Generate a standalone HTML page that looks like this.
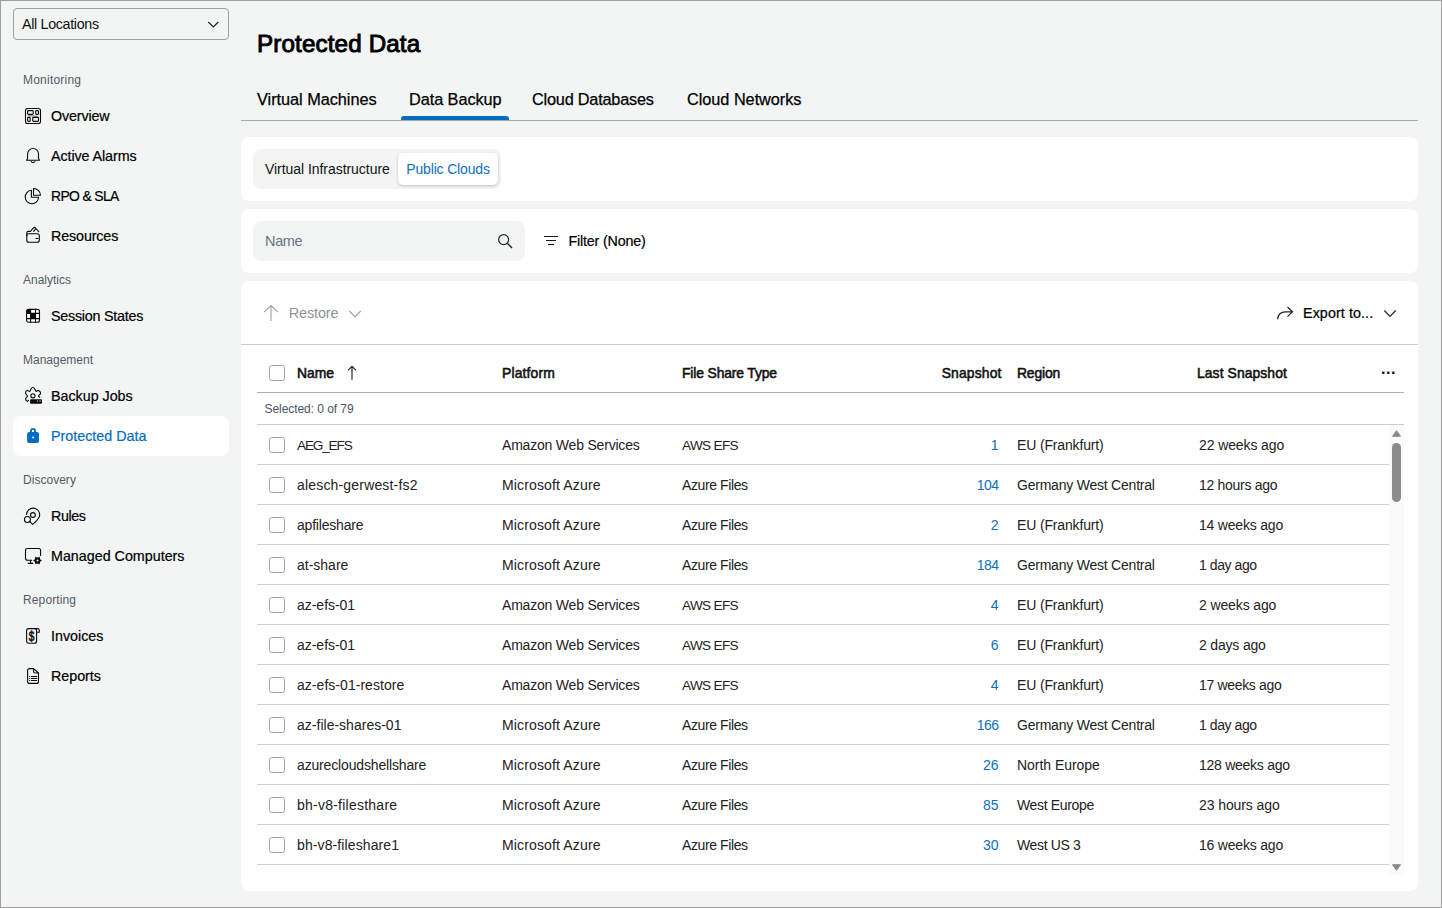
<!DOCTYPE html>
<html lang="en">
<head>
<meta charset="utf-8">
<title>Protected Data</title>
<style>
*{box-sizing:border-box;margin:0;padding:0}
html,body{width:1442px;height:908px;overflow:hidden}
body{background:#f3f5f5;font-family:"Liberation Sans",sans-serif;color:#111;position:relative;font-size:14px}
.frame{position:absolute;left:0;top:0;width:1442px;height:908px;border:1px solid #a0a0a0;pointer-events:none;z-index:10}
.abs{position:absolute;white-space:nowrap}
/* sidebar */
.loc{left:13px;top:8px;width:216px;height:32px;border:1px solid #9b9fa3;border-radius:4px}
.loc span{position:absolute;left:8px;top:0;line-height:31px;font-size:14.3px}
.sec{left:23px;font-size:12px;color:#545a66;line-height:16px}
.nav{left:13px;width:216px;height:40px;border-radius:8px}
.nav .t{position:absolute;left:38px;top:0;line-height:40px;font-size:14.3px;color:#000;-webkit-text-stroke:0.2px #000}
.nav svg{position:absolute;left:12px;top:12px;width:16px;height:16px}
.nav.sel{background:#fff}
.nav.sel .t{color:#046cbe;-webkit-text-stroke:0.2px #046cbe}
/* main */
h1{left:257px;top:28.5px;font-size:24.2px;line-height:30px;font-weight:400;color:#000;-webkit-text-stroke:0.95px #000}
.tab{top:88px;font-size:16.3px;line-height:22px;color:#000;-webkit-text-stroke:0.25px #000}
.tabline{left:241px;top:120px;width:1177px;height:1px;background:#a8acae}
.tabsel{left:401px;top:116px;width:108px;height:4px;background:#006dbe;border-radius:3px 3px 0 0}
.panel{left:241px;width:1177px;background:#fff;border-radius:8px}
.seg{left:253px;top:149px;width:248px;height:40px;border-radius:8px;background:#f3f5f5}
.seg .a{position:absolute;left:12px;top:0;line-height:40px;font-size:14px;color:#111}
.seg .b{position:absolute;left:145px;top:4px;width:100px;height:32px;border-radius:5px;background:#fff;box-shadow:0 1px 3px rgba(0,0,0,.22);text-align:center;line-height:32px;font-size:14px;color:#0c70c0}
.search{left:253px;top:221px;width:272px;height:40px;border-radius:8px;background:#f3f5f5}
.search .ph{position:absolute;left:12px;top:0;line-height:40px;font-size:14.5px;color:#6c737c}
.filter{left:568.5px;top:221px;line-height:40px;font-size:14.3px;color:#000;-webkit-text-stroke:0.2px #000}
.restore{left:288.8px;top:293px;line-height:40px;font-size:14.5px;color:#8d949b}
.export{left:1303px;top:293px;line-height:40px;font-size:14.3px;color:#000;-webkit-text-stroke:0.2px #000}
.hline{left:241px;top:344px;width:1177px;height:1px;background:#c9cfd1}
.th{top:353px;line-height:41px;font-size:13.9px;font-weight:400;color:#111;-webkit-text-stroke:0.55px #111}
.dots{left:1381px;top:349px;line-height:40px;font-size:16px;font-weight:700;letter-spacing:0.5px;color:#111}
.thline{left:257px;top:392px;width:1147px;height:1px;background:#a9b0b3}
.selrow{left:264.5px;top:393px;line-height:33px;font-size:12px;color:#4d5562}
.selline{left:257px;top:424px;width:1147px;height:1px;background:#c9cfd1}
.cb{position:absolute;left:12px;top:12px;width:16px;height:16px;border:1px solid #9da3a8;border-radius:2.5px;background:#fff}
.row{left:257px;width:1132px;height:40px;border-bottom:1px solid #ccd3d5;color:#222;font-size:14px;line-height:41px}
.row .c{position:absolute;top:0;white-space:nowrap}
.c1{left:40px}.c2{left:245px}.c3{left:425px}.c4{right:390.5px;color:#0c70c0}.c5{left:760px}.c6{left:942px}
.sbtrack{left:1389px;top:425px;width:15px;height:450px;background:#fafafa}
.sbthumb{left:1392px;top:443px;width:9px;height:59px;border-radius:5px;background:#8b8b8b}
</style>
</head>
<body>
<div class="frame"></div>
<!-- sidebar -->
<div class="abs loc"><span style="letter-spacing:-0.333px">All Locations</span>
<svg style="position:absolute;left:193px;top:10px" width="13" height="11" viewBox="0 0 13 11"><path d="M1.3 3 L6.3 8 L11.3 3" fill="none" stroke="#222" stroke-width="1.2"/></svg>
</div>
<div class="abs sec" style="top:72px;letter-spacing:0.222px">Monitoring</div>
<div class="abs nav" style="top:96px"><svg viewBox="0 0 16 16" overflow="visible"><rect x="0.5" y="0.5" width="15" height="15" rx="2" fill="none" stroke="#0a0a0a" stroke-width="1.1" stroke-linecap="round" stroke-linejoin="round"/><path d="M3.2 7.6 L12.8 8.3" stroke="#8a8a8a" stroke-width="1.3" fill="none"/><rect x="2.6" y="2.6" width="5.6" height="3.8" rx="0.8" fill="none" stroke="#0a0a0a" stroke-width="1.1" stroke-linecap="round" stroke-linejoin="round"/><rect x="10.7" y="2.6" width="2.8" height="3.8" rx="0.8" fill="none" stroke="#0a0a0a" stroke-width="1.1" stroke-linecap="round" stroke-linejoin="round"/><rect x="2.6" y="9.35" width="2.6" height="4" rx="0.8" fill="none" stroke="#0a0a0a" stroke-width="1.1" stroke-linecap="round" stroke-linejoin="round"/><rect x="7.7" y="9.35" width="5.8" height="4" rx="0.8" fill="none" stroke="#0a0a0a" stroke-width="1.1" stroke-linecap="round" stroke-linejoin="round"/></svg><span class="t" style="letter-spacing:-0.143px">Overview</span></div>
<div class="abs nav" style="top:136px"><svg viewBox="0 0 16 16" overflow="visible"><path d="M2.6 10.5 V6 A5.45 5.45 0 0 1 13.5 6 V10.5 L14.5 12.2 H1.6 Z" fill="none" stroke="#0a0a0a" stroke-width="1.1" stroke-linecap="round" stroke-linejoin="round"/><path d="M6 13 A2.1 2.1 0 0 0 10.1 13" fill="none" stroke="#0a0a0a" stroke-width="1.1" stroke-linecap="round" stroke-linejoin="round"/></svg><span class="t" style="letter-spacing:-0.083px">Active Alarms</span></div>
<div class="abs nav" style="top:176px"><svg viewBox="0 0 16 16" overflow="visible"><path d="M6.4 2.3 V9.3 H13.6 A6.7 6.7 0 1 1 6.4 2.3 Z" fill="none" stroke="#0a0a0a" stroke-width="1.1" stroke-linecap="round" stroke-linejoin="round"/><path d="M8.5 0.5 V7.3 H15.5 A7 7 0 0 0 8.5 0.5 Z" fill="none" stroke="#0a0a0a" stroke-width="1.1" stroke-linecap="round" stroke-linejoin="round"/></svg><span class="t" style="font-size:13.9px;letter-spacing:-0.625px">RPO &amp; SLA</span></div>
<div class="abs nav" style="top:216px"><svg viewBox="0 0 16 16" overflow="visible"><rect x="1.8" y="5.7" width="12.5" height="8.6" rx="2" fill="none" stroke="#0a0a0a" stroke-width="1.1" stroke-linecap="round" stroke-linejoin="round"/><path d="M1.8 7.5 V5 Q1.8 3.4 3.4 3.4 H5.4 L8.7 -0.3 Q9.3 -0.9 10 -0.3 L13.8 3.6 M8.6 3.4 L10.6 0.9 M11 10.5 H13" fill="none" stroke="#0a0a0a" stroke-width="1.1" stroke-linecap="round" stroke-linejoin="round"/></svg><span class="t" style="letter-spacing:-0.125px">Resources</span></div>
<div class="abs sec" style="top:272px">Analytics</div>
<div class="abs nav" style="top:296px"><svg viewBox="0 0 16 16" overflow="visible"><rect x="1.6" y="1.4" width="12.9" height="12.9" rx="2" fill="#fff" stroke="#0a0a0a" stroke-width="1.1"/><path d="M5.6 1.4 V14.3 M10.5 1.4 V14.3 M1.6 5.4 H14.5 M1.6 10.6 H14.5" fill="none" stroke="#0a0a0a" stroke-width="1.1" stroke-linecap="round" stroke-linejoin="round"/><path d="M1.6 3.4 Q1.6 1.4 3.6 1.4 H5.6 V5.4 H1.6 Z M5.6 5.4 H10.5 V10.6 H5.6 Z" fill="#0a0a0a"/></svg><span class="t" style="letter-spacing:-0.231px">Session States</span></div>
<div class="abs sec" style="top:352px">Management</div>
<div class="abs nav" style="top:376px"><svg viewBox="0 0 16 16" overflow="visible"><path d="M3.4 12.3 C3.22 12.47 2.78 13.55 2.3 13.3 C1.82 13.05 0.48 11.65 0.5 10.8 C0.52 9.95 2.40 9.13 2.4 8.2 C2.40 7.27 0.55 6.17 0.5 5.2 C0.45 4.23 1.42 2.70 2.1 2.4 C2.78 2.10 3.90 3.72 4.6 3.4 C5.30 3.08 5.75 1.20 6.3 0.5 C6.85 -0.20 7.37 -0.80 7.9 -0.8 C8.43 -0.80 8.95 -0.20 9.5 0.5 C10.05 1.20 10.53 3.08 11.2 3.4 C11.87 3.72 12.77 2.10 13.5 2.4 C14.23 2.70 15.60 4.27 15.6 5.2 C15.60 6.13 13.63 7.32 13.5 8.0 C13.37 8.68 14.58 9.08 14.8 9.3" fill="none" stroke="#0a0a0a" stroke-width="1.1" stroke-linecap="round" stroke-linejoin="round"/><circle cx="7.9" cy="7.8" r="2.1" fill="none" stroke="#0a0a0a" stroke-width="1.1" stroke-linecap="round" stroke-linejoin="round"/><rect x="5.1" y="11.2" width="11.9" height="4.6" rx="0.8" fill="#0a0a0a"/><rect x="12" y="12.3" width="1" height="1.5" fill="#aaa"/><rect x="14.3" y="12.3" width="1.5" height="1.5" fill="#888"/></svg><span class="t" style="letter-spacing:-0.020px">Backup Jobs</span></div>
<div class="abs nav sel" style="top:416px"><svg viewBox="0 0 16 16" overflow="visible"><rect x="2.1" y="4.1" width="11.9" height="10.9" rx="2" fill="#086dc0"/><path d="M6 4.5 V2.9 A2 2 0 0 1 10 2.9 V4.5" fill="none" stroke="#086dc0" stroke-width="1.9"/><rect x="7" y="8.7" width="2.2" height="1.5" fill="#fff"/></svg><span class="t">Protected Data</span></div>
<div class="abs sec" style="top:472px;letter-spacing:0.025px">Discovery</div>
<div class="abs nav" style="top:496px"><svg viewBox="0 0 16 16" overflow="visible"><path d="M1.5 6.4 A6.6 6.6 0 0 1 14.7 7 C14.7 10.5 11 13.5 7.6 16.4 L4.6 13.4" fill="none" stroke="#0a0a0a" stroke-width="1.1" stroke-linecap="round" stroke-linejoin="round"/><circle cx="7.9" cy="7" r="2.4" fill="none" stroke="#0a0a0a" stroke-width="1.1" stroke-linecap="round" stroke-linejoin="round"/><circle cx="2.45" cy="11.5" r="3" fill="none" stroke="#0a0a0a" stroke-width="1.1" stroke-linecap="round" stroke-linejoin="round"/></svg><span class="t" style="letter-spacing:-0.400px">Rules</span></div>
<div class="abs nav" style="top:536px"><svg viewBox="0 0 16 16" overflow="visible"><path d="M15.6 7.5 V2.5 Q15.6 0.5 13.6 0.5 H2.5 Q0.5 0.5 0.5 2.5 V10.3 Q0.5 12.3 2.5 12.3 H6.7 M5.6 12.3 V15.4 M3.2 15.4 H7.8" fill="none" stroke="#0a0a0a" stroke-width="1.1" stroke-linecap="round" stroke-linejoin="round"/><polygon points="17.00,12.50 14.75,13.80 14.75,16.40 12.50,15.10 10.25,16.40 10.25,13.80 8.00,12.50 10.25,11.20 10.25,8.60 12.50,9.90 14.75,8.60 14.75,11.20" fill="#0a0a0a"/><circle cx="12.5" cy="12.5" r="2.9" fill="#0a0a0a"/><circle cx="12.5" cy="12.5" r="0.95" fill="#fff"/></svg><span class="t">Managed Computers</span></div>
<div class="abs sec" style="top:592px;letter-spacing:0.125px">Reporting</div>
<div class="abs nav" style="top:616px"><svg viewBox="0 0 16 16" overflow="visible"><rect x="1.6" y="0.6" width="10" height="14.7" rx="2" fill="none" stroke="#0a0a0a" stroke-width="1.1" stroke-linecap="round" stroke-linejoin="round"/><path d="M10 0.6 H12.5 Q14.3 0.6 14.3 2.4 V4.2 H11.6" fill="none" stroke="#0a0a0a" stroke-width="1.1" stroke-linecap="round" stroke-linejoin="round"/><text transform="translate(6.5,12.9) scale(0.72,1)" font-family="Liberation Sans, sans-serif" font-size="14" text-anchor="middle" fill="#0a0a0a" stroke="#0a0a0a" stroke-width="0.55" text-rendering="geometricPrecision">$</text></svg><span class="t">Invoices</span></div>
<div class="abs nav" style="top:656px"><svg viewBox="0 0 16 16" overflow="visible"><path d="M4.6 0.6 H8.6 L13.5 5 V13.4 Q13.5 15.4 11.5 15.4 H4.6 Q2.6 15.4 2.6 13.4 V2.6 Q2.6 0.6 4.6 0.6 M8.6 0.6 V3.5 Q8.6 5 10.1 5 H13.5 M6.3 8.45 H11.8 M6.3 10.45 H11.8 M6.3 12.5 H11.8 M4.4 8.45 h0.01 M4.4 10.45 h0.01 M4.4 12.5 h0.01" fill="none" stroke="#0a0a0a" stroke-width="1.1" stroke-linecap="round" stroke-linejoin="round"/></svg><span class="t" style="letter-spacing:-0.033px">Reports</span></div>

<!-- main -->
<h1 class="abs" style="letter-spacing:0.138px">Protected Data</h1>
<div class="abs tab" style="left:257px;letter-spacing:-0.027px">Virtual Machines</div>
<div class="abs tab" style="left:409px;letter-spacing:-0.060px">Data Backup</div>
<div class="abs tab" style="left:532px;letter-spacing:-0.214px">Cloud Databases</div>
<div class="abs tab" style="left:687px;letter-spacing:-0.031px">Cloud Networks</div>
<div class="abs tabline"></div>
<div class="abs tabsel"></div>
<div class="abs panel" style="top:137px;height:64px"></div>
<div class="abs panel" style="top:209px;height:64px"></div>
<div class="abs panel" style="top:281px;height:610px"></div>
<div class="abs seg"><span class="a" style="letter-spacing:-0.048px">Virtual Infrastructure</span><span class="b"><span style="letter-spacing:-0.167px">Public Clouds</span></span></div>
<div class="abs search"><span class="ph" style="letter-spacing:-0.333px">Name</span>
<svg style="position:absolute;left:244px;top:12px" width="16" height="16" viewBox="0 0 16 16"><circle cx="6.6" cy="6.6" r="5" fill="none" stroke="#222" stroke-width="1.2"/><path d="M10.2 10.2 L15 15" stroke="#222" stroke-width="1.4" fill="none"/></svg>
</div>
<svg class="abs" style="left:543px;top:234px" width="16" height="14" viewBox="0 0 16 14"><path d="M1 2.5 H15 M3 6.5 H13 M5 10.5 H11" stroke="#1a1a1a" stroke-width="1" fill="none"/></svg>
<div class="abs filter" style="letter-spacing:-0.183px">Filter (None)</div>
<svg class="abs" style="left:263px;top:304px" width="16" height="18" viewBox="0 0 16 18"><path d="M8 17 V2 M1.2 8.2 L8 1.5 L14.8 8.2" stroke="#9ba1a7" stroke-width="1.1" fill="none"/></svg>
<div class="abs restore" style="letter-spacing:-0.167px">Restore</div>
<svg class="abs" style="left:348px;top:308.7px" width="14" height="10" viewBox="0 0 14 10"><path d="M1.3 2 L7 8 L12.7 2" stroke="#9ba1a7" stroke-width="1.1" fill="none"/></svg>
<svg class="abs" style="left:1276px;top:305px" width="18" height="16" viewBox="0 0 18 16"><path d="M1.6 14.2 C2 9.6 4.8 6.8 9.5 6.8 H16 M11.5 2 L16.5 6.8 L11.5 11.6" stroke="#222" stroke-width="1.2" fill="none"/></svg>
<div class="abs export" style="letter-spacing:0.091px">Export to...</div>
<svg class="abs" style="left:1383px;top:308px" width="14" height="10" viewBox="0 0 14 10"><path d="M1.3 2.5 L7 8.5 L12.7 2.5" stroke="#222" stroke-width="1.2" fill="none"/></svg>
<div class="abs hline"></div>
<i class="cb abs" style="left:269px;top:365px"></i>
<div class="abs th" style="left:297px">Name</div>
<div class="abs th" style="left:502px;letter-spacing:0.143px">Platform</div>
<div class="abs th" style="left:682px;letter-spacing:-0.143px">File Share Type</div>
<div class="abs th" style="right:440.5px;letter-spacing:0.143px">Snapshot</div>
<div class="abs th" style="left:1017px;letter-spacing:-0.160px">Region</div>
<div class="abs th" style="left:1197px;letter-spacing:0.083px">Last Snapshot</div>
<svg class="abs" style="left:345px;top:365px" width="14" height="16" viewBox="0 0 14 16"><path d="M7 14.8 V1.8 M3.2 5.2 L7 1.4 L10.8 5.2" stroke="#222" stroke-width="1.15" fill="none"/></svg>
<div class="abs dots">...</div>
<div class="abs thline"></div>
<div class="abs selrow" style="letter-spacing:-0.062px">Selected: 0 of 79</div>
<div class="abs selline"></div>
<div class="abs row" style="top:425px"><i class="cb"></i><span class="c c1" style="font-size:13.6px;letter-spacing:-1.167px">AEG_EFS</span><span class="c c2" style="letter-spacing:-0.200px">Amazon Web Services</span><span class="c c3" style="font-size:13.6px;letter-spacing:-0.667px">AWS EFS</span><span class="c c4">1</span><span class="c c5" style="letter-spacing:-0.154px">EU (Frankfurt)</span><span class="c c6" style="letter-spacing:-0.109px">22 weeks ago</span></div>
<div class="abs row" style="top:465px"><i class="cb"></i><span class="c c1" style="letter-spacing:0.176px">alesch-gerwest-fs2</span><span class="c c2" style="letter-spacing:0.143px">Microsoft Azure</span><span class="c c3" style="letter-spacing:-0.400px">Azure Files</span><span class="c c4" style="letter-spacing:-0.500px">104</span><span class="c c5" style="letter-spacing:-0.221px">Germany West Central</span><span class="c c6" style="letter-spacing:-0.291px">12 hours ago</span></div>
<div class="abs row" style="top:505px"><i class="cb"></i><span class="c c1" style="letter-spacing:-0.200px">apfileshare</span><span class="c c2" style="letter-spacing:0.143px">Microsoft Azure</span><span class="c c3" style="letter-spacing:-0.400px">Azure Files</span><span class="c c4">2</span><span class="c c5" style="letter-spacing:-0.154px">EU (Frankfurt)</span><span class="c c6" style="letter-spacing:-0.200px">14 weeks ago</span></div>
<div class="abs row" style="top:545px"><i class="cb"></i><span class="c c1">at-share</span><span class="c c2" style="letter-spacing:0.143px">Microsoft Azure</span><span class="c c3" style="letter-spacing:-0.400px">Azure Files</span><span class="c c4" style="letter-spacing:-0.500px">184</span><span class="c c5" style="letter-spacing:-0.221px">Germany West Central</span><span class="c c6" style="letter-spacing:-0.425px">1 day ago</span></div>
<div class="abs row" style="top:585px"><i class="cb"></i><span class="c c1" style="letter-spacing:-0.025px">az-efs-01</span><span class="c c2" style="letter-spacing:-0.200px">Amazon Web Services</span><span class="c c3" style="font-size:13.6px;letter-spacing:-0.667px">AWS EFS</span><span class="c c4">4</span><span class="c c5" style="letter-spacing:-0.154px">EU (Frankfurt)</span><span class="c c6" style="letter-spacing:-0.120px">2 weeks ago</span></div>
<div class="abs row" style="top:625px"><i class="cb"></i><span class="c c1" style="letter-spacing:-0.025px">az-efs-01</span><span class="c c2" style="letter-spacing:-0.200px">Amazon Web Services</span><span class="c c3" style="font-size:13.6px;letter-spacing:-0.667px">AWS EFS</span><span class="c c4">6</span><span class="c c5" style="letter-spacing:-0.154px">EU (Frankfurt)</span><span class="c c6" style="letter-spacing:-0.178px">2 days ago</span></div>
<div class="abs row" style="top:665px"><i class="cb"></i><span class="c c1" style="letter-spacing:0.038px">az-efs-01-restore</span><span class="c c2" style="letter-spacing:-0.200px">Amazon Web Services</span><span class="c c3" style="font-size:13.6px;letter-spacing:-0.667px">AWS EFS</span><span class="c c4">4</span><span class="c c5" style="letter-spacing:-0.154px">EU (Frankfurt)</span><span class="c c6" style="letter-spacing:-0.327px">17 weeks ago</span></div>
<div class="abs row" style="top:705px"><i class="cb"></i><span class="c c1" style="letter-spacing:0.012px">az-file-shares-01</span><span class="c c2" style="letter-spacing:0.143px">Microsoft Azure</span><span class="c c3" style="letter-spacing:-0.400px">Azure Files</span><span class="c c4" style="letter-spacing:-0.500px">166</span><span class="c c5" style="letter-spacing:-0.221px">Germany West Central</span><span class="c c6" style="letter-spacing:-0.425px">1 day ago</span></div>
<div class="abs row" style="top:745px"><i class="cb"></i><span class="c c1" style="letter-spacing:-0.158px">azurecloudshellshare</span><span class="c c2" style="letter-spacing:0.143px">Microsoft Azure</span><span class="c c3" style="letter-spacing:-0.400px">Azure Files</span><span class="c c4">26</span><span class="c c5" style="letter-spacing:-0.036px">North Europe</span><span class="c c6" style="letter-spacing:-0.267px">128 weeks ago</span></div>
<div class="abs row" style="top:785px"><i class="cb"></i><span class="c c1" style="letter-spacing:0.240px">bh-v8-filesthare</span><span class="c c2" style="letter-spacing:0.143px">Microsoft Azure</span><span class="c c3" style="letter-spacing:-0.400px">Azure Files</span><span class="c c4">85</span><span class="c c5" style="letter-spacing:-0.340px">West Europe</span><span class="c c6" style="letter-spacing:-0.091px">23 hours ago</span></div>
<div class="abs row" style="top:825px"><i class="cb"></i><span class="c c1" style="letter-spacing:0.107px">bh-v8-fileshare1</span><span class="c c2" style="letter-spacing:0.143px">Microsoft Azure</span><span class="c c3" style="letter-spacing:-0.400px">Azure Files</span><span class="c c4">30</span><span class="c c5" style="letter-spacing:-0.350px">West US 3</span><span class="c c6" style="letter-spacing:-0.200px">16 weeks ago</span></div>
<div class="abs sbtrack"></div>
<div class="abs sbthumb"></div>
<svg class="abs" style="left:1392px;top:430px" width="9" height="7" viewBox="0 0 9 7" overflow="visible"><path d="M4.5 0.7 L8.5 6.3 H0.5 Z" fill="#8b8b8b" stroke="#8b8b8b" stroke-width="1" stroke-linejoin="round"/></svg>
<svg class="abs" style="left:1392px;top:864px" width="9" height="7" viewBox="0 0 9 7" overflow="visible"><path d="M0.5 0.7 H8.5 L4.5 6.3 Z" fill="#8b8b8b" stroke="#8b8b8b" stroke-width="1" stroke-linejoin="round"/></svg>
</body>
</html>
